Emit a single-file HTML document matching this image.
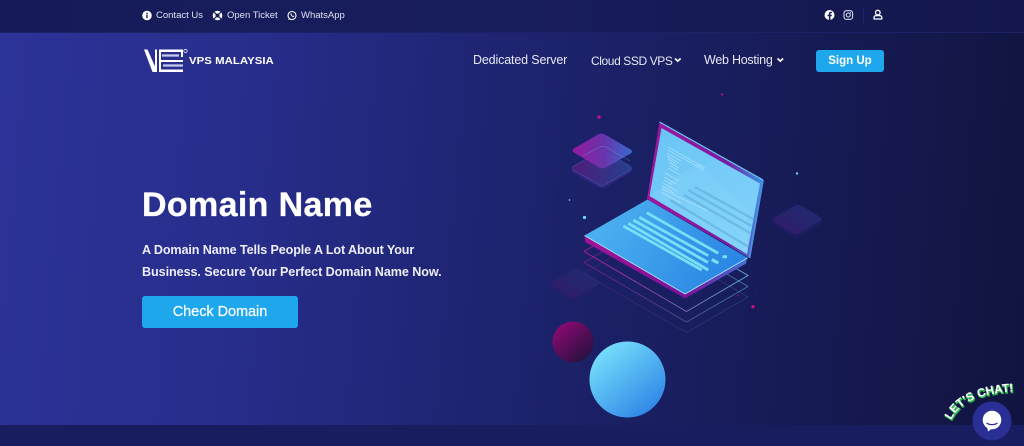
<!DOCTYPE html>
<html><head><meta charset="utf-8"><style>
html,body{margin:0;padding:0}
body{width:1024px;height:446px;overflow:hidden;position:relative;background:#151a58;font-family:"Liberation Sans",sans-serif;color:#fff}
.t{position:absolute;white-space:nowrap}
#hero{position:absolute;left:0;top:33px;width:1024px;height:392px;background:linear-gradient(95deg,#2c3398 0%,#272d8a 25%,#1e2470 48%,#181d5c 70%,#11143f 100%)}
#top{position:absolute;left:0;top:0;width:1024px;height:33px;background:linear-gradient(90deg,#161b58,#181d5c 50%,#13174c);border-bottom:1px solid #1d2268;box-sizing:border-box}
#bot{position:absolute;left:0;top:425px;width:1024px;height:21px;background:#171d5f}
.top{font-size:9.5px;top:10px;color:#dfe1f2}
.nav{font-size:12.5px;top:53px;color:#e6e7f4}
.btn{position:absolute;background:#1fa7ee;border-radius:3px;text-align:center}
svg{position:absolute;left:0;top:0}
</style></head><body>
<div id="hero"></div><div id="top"></div><div id="bot"></div>

<div class="t top" style="left:156px">Contact Us</div>
<div class="t top" style="left:227px">Open Ticket</div>
<div class="t top" style="left:301px">WhatsApp</div>

<div class="t" style="left:189px;top:55px;font-size:10.5px;font-weight:bold;letter-spacing:.06px;transform:scaleX(1.08);transform-origin:left">VPS MALAYSIA</div>

<div class="t nav" style="left:473px;letter-spacing:-.15px">Dedicated Server</div>
<div class="t nav" style="left:591px;top:54px;font-size:12px;letter-spacing:-.4px">Cloud SSD VPS</div>
<div class="t nav" style="left:704px;letter-spacing:-.25px">Web Hosting</div>
<div class="btn" style="left:816px;top:50px;width:68px;height:22px;line-height:22px;font-size:11.500px;font-weight:bold">Sign Up</div>

<div class="t" style="left:142px;top:185px;font-size:34px;line-height:40px;font-weight:bold;letter-spacing:.35px;-webkit-text-stroke:.3px #fff">Domain Name</div>
<div class="t" style="left:142px;top:243px;font-size:12.600px;font-weight:bold;letter-spacing:-.12px;color:#eceDf7">A Domain Name Tells People A Lot About Your</div>
<div class="t" style="left:142px;top:265px;font-size:12.600px;font-weight:bold;letter-spacing:-.07px;color:#eceDf7">Business. Secure Your Perfect Domain Name Now.</div>
<div class="btn" style="left:142px;top:296px;width:156px;height:32px;line-height:33px;font-size:14.500px;letter-spacing:-.05px;font-weight:normal;-webkit-text-stroke:.2px #fff">Check Domain</div>

<svg width="1024" height="446" viewBox="0 0 1024 446" fill="none">
<defs>
<linearGradient id="base" x1="600" y1="220" x2="720" y2="290" gradientUnits="userSpaceOnUse"><stop offset="0" stop-color="#4cb0f0"/><stop offset="1" stop-color="#2a86e4"/></linearGradient>
<linearGradient id="scr" x1="650" y1="130" x2="750" y2="250" gradientUnits="userSpaceOnUse"><stop offset="0" stop-color="#68c4f5"/><stop offset="1" stop-color="#84d2fb"/></linearGradient>
<linearGradient id="edge" x1="650" y1="200" x2="760" y2="200" gradientUnits="userSpaceOnUse"><stop offset="0" stop-color="#a0169e"/><stop offset=".7" stop-color="#7a1aa0"/><stop offset="1" stop-color="#3d8ae0"/></linearGradient>
<linearGradient id="side" x1="585" y1="250" x2="750" y2="270" gradientUnits="userSpaceOnUse"><stop offset="0" stop-color="#a01498"/><stop offset=".65" stop-color="#7a129a"/><stop offset="1" stop-color="#3b7adc"/></linearGradient>
<linearGradient id="dia" x1="572" y1="150" x2="632" y2="150" gradientUnits="userSpaceOnUse"><stop offset="0" stop-color="#a01aa4"/><stop offset=".55" stop-color="#6c36b0"/><stop offset="1" stop-color="#3a72d8"/></linearGradient>
<linearGradient id="dia2" x1="572" y1="170" x2="632" y2="170" gradientUnits="userSpaceOnUse"><stop offset="0" stop-color="#4f1c78"/><stop offset="1" stop-color="#24408e"/></linearGradient>
<linearGradient id="dia3" x1="0" y1="1" x2="1" y2="0"><stop offset="0" stop-color="#331a68"/><stop offset="1" stop-color="#1d2c72"/></linearGradient>
<linearGradient id="ball1" x1="0.15" y1="0.1" x2="0.85" y2="0.9"><stop offset="0" stop-color="#8a0a70"/><stop offset="1" stop-color="#27103f"/></linearGradient>
<linearGradient id="ball2" x1="0.2" y1="0.1" x2="0.85" y2="0.9"><stop offset="0" stop-color="#74dcfb"/><stop offset="1" stop-color="#2f86e6"/></linearGradient>
<linearGradient id="l1" x1="584" y1="250" x2="748" y2="300" gradientUnits="userSpaceOnUse"><stop offset="0" stop-color="#b01a90"/><stop offset=".5" stop-color="#8a4ab0"/><stop offset="1" stop-color="#5ac0e0"/></linearGradient>
<path id="arc" d="M951 420C959 404 976 392 1024 391"/>
</defs>

<!-- top bar icons -->
<circle cx="147" cy="15.500" r="4.800" fill="#fff"/><rect x="146.300" y="14.500" width="1.400" height="3.600" fill="#171c5a"/><rect x="146.300" y="12.600" width="1.400" height="1.300" fill="#171c5a"/>
<circle cx="217.500" cy="15.500" r="4.800" fill="#fff"/><circle cx="217.500" cy="15.500" r="2" fill="#171c5a"/><path d="M214.200 12.200l2 2M220.800 12.200l-2 2M214.200 18.800l2-2M220.800 18.800l-2-2" stroke="#171c5a" stroke-width="1.100"/>
<circle cx="292" cy="15.500" r="4" stroke="#fff" stroke-width="1.100"/><path d="M288.300 20l.8-2.600 1.700 1.700z" fill="#fff"/><path d="M290.400 13.800c.2 1.800 1.500 3.100 3.200 3.300l.6-1-1.100-.6-.5.4c-.5-.2-.9-.7-1.100-1.100l.4-.5-.6-1.100z" fill="#fff"/>
<circle cx="829.500" cy="15" r="5" fill="#fff"/><path d="M830.400 20v-3.800h1.300l.2-1.500h-1.500v-.9c0-.5.200-.7.700-.7h.8v-1.300c-1.700-.3-3 .1-3 1.800v1.100h-1.300v1.500h1.300V20z" fill="#171c5a"/>
<rect x="844" y="10.700" width="8.600" height="8.600" rx="2.300" stroke="#d5d7ea" stroke-width="1.100"/><circle cx="848.300" cy="15" r="2" stroke="#d5d7ea" stroke-width="1.100"/><circle cx="850.600" cy="12.700" r=".6" fill="#d5d7ea"/>
<path d="M863.500 8v17" stroke="#1c2165" stroke-width="1"/>
<circle cx="877.800" cy="12.600" r="2.300" stroke="#fff" stroke-width="1.300"/><path d="M874 19h7.800v-1.400c0-1.300-1-2-2-2h-3.800c-1 0-2 .7-2 2z" stroke="#fff" stroke-width="1.300" stroke-linejoin="round"/>

<!-- logo -->
<path d="M144 49.500h3.500l7.500 17V49.500h2V72h-4.500z" fill="#fff"/>
<path d="M159 49.500h24V57h-2v-5h-20v8h22v2h-22v7.500h22V72h-24z" fill="#fff"/>
<path d="M162 55.500h17M163 65.500h20" stroke="#c8ccee" stroke-width="2.200"/>
<circle cx="185.500" cy="51" r="1.700" stroke="#dfe1f2" stroke-width=".8"/>

<!-- chevrons -->
<path d="M675 58.500l2.800 2.600 2.800-2.600" stroke="#fff" stroke-width="1.700"/>
<path d="M777.500 58.500l2.800 2.600 2.800-2.600" stroke="#fff" stroke-width="1.700"/>

<!-- dots -->
<circle cx="599" cy="117" r="1.700" fill="#c2107f"/><circle cx="722" cy="94.500" r="1.100" fill="#c2107f"/>
<circle cx="797" cy="173.500" r="1.200" fill="#5fd0ee"/><circle cx="569.500" cy="200" r=".9" fill="#5fd0ee"/><circle cx="584.500" cy="217.500" r="1.600" fill="#62dcf2"/>
<circle cx="753" cy="306.700" r="1.600" fill="#d4107f"/><circle cx="738" cy="295.500" r=".8" fill="#a0107f"/><circle cx="755" cy="291" r=".5" fill="#a0107f"/>

<!-- stacked diamonds left -->
<path d="M572 168l0 4 27 15.500c2 1 4 1 6 0l26.500-15.500v-4z" fill="#3a2784" opacity=".8"/>
<path d="M574 166l25-14.500c2-1 4-1 6 0L630 166c2 1.300 2 3 0 4.200l-25 14.500c-2 1-4 1-6 0L574 170.200c-2-1.200-2-3 0-4.200z" fill="url(#dia2)" stroke="#3b6bb5" stroke-width=".5"/>
<path d="M574 148.500l24-14c2-1.200 5-1.200 7 0l25.500 15c2 1.200 2 2.800 0 4L606 167.500c-2 1.200-5 1.200-7 0l-25-15c-2-1.200-2-2.800 0-4z" fill="url(#dia)" opacity=".92"/>
<path d="M583 156l17-9c2-1 4-1 6 0l24 14" stroke="#7cc8ee" stroke-width=".4" opacity=".6"/>

<!-- right diamond -->
<path d="M774 221l21-12.500c2-1 4-1 6 0l19 11.500c2 1.200 2 3.300 0 4.500l-21 12.500c-2 1-4 1-6 0l-19-11.500c-2-1.200-2-3.300 0-4.500z" fill="#1b1e5e"/>
<path d="M774 218l21-12.500c2-1 4-1 6 0l19 11.500c2 1.200 2 2.800 0 4l-21 12.500c-2 1-4 1-6 0l-19-11.500c-2-1.200-2-2.800 0-4z" fill="url(#dia3)"/>
<!-- lower-left diamond -->
<path d="M552 285l21-12.500c2-1 4-1 6 0l19 11.500c2 1.200 2 3.300 0 4.500l-21 12.500c-2 1-4 1-6 0l-19-11.500c-2-1.200-2-3.300 0-4.500z" fill="#1f2068"/>
<path d="M552 282l21-12.500c2-1 4-1 6 0l19 11.500c2 1.200 2 2.800 0 4l-21 12.500c-2 1-4 1-6 0l-19-11.500c-2-1.200-2-2.800 0-4z" fill="url(#dia3)"/>

<!-- layered frames -->
<path d="M584 251.500L686.500 311.500 748 275.500 646 215z" stroke="url(#l1)" stroke-width=".9" stroke-linejoin="round"/>
<path d="M584 262.500L686.500 322 748 286.500 646 226z" stroke="url(#l1)" stroke-width=".8" stroke-linejoin="round" opacity=".6"/>
<path d="M584 273.500L686.500 332.500 748 297 646 237z" stroke="url(#l1)" stroke-width=".7" stroke-linejoin="round" opacity=".28"/>

<!-- laptop base -->
<path d="M584.500 236l.7 6 100 56.500 61-35 .5-5.500z" fill="url(#side)"/>
<path d="M584.500 235.500L647.500 199.500 748 258 685 294z" fill="url(#base)"/>
<path d="M584.500 235.500L685 294 747.500 258" stroke="#a6e6fb" stroke-width=".9"/>
<!-- keys -->
<g stroke="#78e0f6" stroke-width="2.800">
<path d="M646.700 212.700L718.300 253.300M639.300 217.300L708.300 255.700M633.300 220L708 262.500M628.300 223.300L708.300 270M623.300 226L701.700 270"/>
<path d="M711.700 259.500l6.600 3.500M722.500 256.700l4.500 0" stroke-width="3"/>
</g>

<!-- screen -->
<path d="M659.500 122L763 180 749.500 258 647 199z" fill="url(#edge)"/>
<path d="M659.500 122L763 180" stroke="#6cc6ee" stroke-width="1.200"/>
<path d="M661.500 128L760 183.500 747 254 649.500 196z" fill="url(#scr)"/>
<path d="M763 180L749.500 258" stroke="#4a90e2" stroke-width="1.800"/>
<path d="M649.500 196l49-33L747 210v44z" fill="#8cd6fb" opacity=".3"/>
<!-- code lines -->
<g stroke="#e6f7ff" stroke-width=".6" opacity=".65">
<path d="M668 147l37 21M668 150l36 20M667 153l14 8M667 156l12 7M668 159l8 4.500M669 162l10 6M669 165l9 5M668 168l12 7M665 173l14 8M664 177l12 7M664 180l8 4.500M663 183l14 8M662 186l12 7M662 189l46 22M661 192l20 11"/>
</g>
<g stroke="#5ba8d6" stroke-width="2.300" opacity=".55">
<path d="M695 187l58 32M688 190l63.500 36M684 195l66 38M670 200l78 46.500"/>
</g>

<!-- balls -->
<circle cx="573" cy="342" r="20.500" fill="url(#ball1)"/>
<circle cx="627.500" cy="379.500" r="38" fill="url(#ball2)"/>

<!-- chat -->
<circle cx="992" cy="421" r="19.500" fill="#2a2f96"/>
<circle cx="992" cy="420" r="9.300" fill="#fff"/><path d="M987 426l1 5.500 4-3z" fill="#fff"/>
<path d="M986.500 423c3 2.200 8 2.200 11 0" stroke="#2a2f96" stroke-width="1.200"/>
<g font-family="Liberation Sans,sans-serif" font-size="11.800" font-weight="bold">
<text fill="#2fb850" stroke="#2fb850" stroke-width="1" transform="translate(.8,1.200)"><textPath href="#arc">LET'S CHAT!</textPath></text>
<text fill="#fff"><textPath href="#arc">LET'S CHAT!</textPath></text>
</g>
</svg>
</body></html>
